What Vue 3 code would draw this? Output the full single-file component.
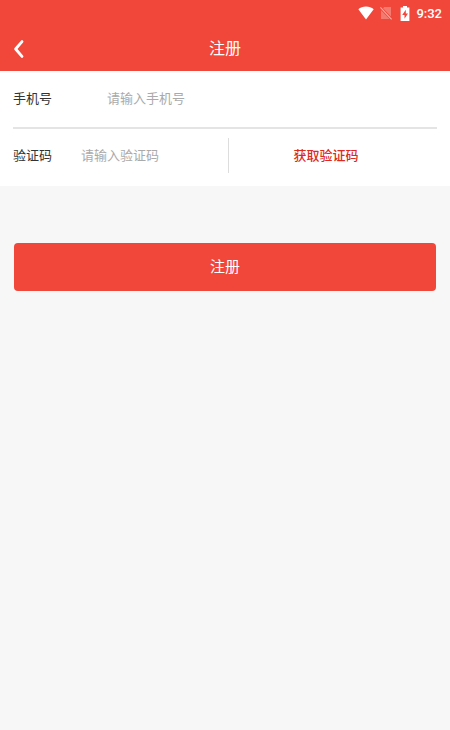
<script setup>
import { ref } from 'vue'

const phone = ref('')
const code = ref('')
</script>

<template>
  <div class="page">
    <header class="header">
      <div class="status">
        <svg class="wifi" viewBox="0 0 16 14" aria-hidden="true">
          <path d="M8 13.5 0.3 3.2C2.4 1.4 5 0.5 8 0.5s5.6 0.9 7.7 2.7z" fill="#fff" />
        </svg>
        <svg class="sim" viewBox="0 0 12 14" aria-hidden="true">
          <path d="M4.2 1H11v9.6L3 2.2zM1 4.2 9.6 13H1z" fill="#f47a6f" />
          <path d="M0.4 1.4 11.6 13.4" stroke="#f8aca5" stroke-width="1.1" />
        </svg>
        <svg class="battery" viewBox="0 0 10 15" aria-hidden="true">
          <path d="M3 0h4v1.6h2.4V15H0.6V1.6H3z" fill="#fff" />
          <path d="M5.8 3.8 2.2 9h2.3v3.8L8 7.6H5.8z" fill="#f0473a" />
        </svg>
        <time class="clock">9:32</time>
      </div>
      <div class="bar">
        <button class="back" type="button" aria-label="返回">
          <svg viewBox="0 0 12 20" aria-hidden="true">
            <path d="M9 2.6 2.6 10 9 17.4" fill="none" stroke="#fff" stroke-width="2.8" stroke-linecap="round" stroke-linejoin="round" />
          </svg>
        </button>
        <h1 class="title">注册</h1>
      </div>
    </header>

    <form class="form" @submit.prevent>
      <div class="fields">
        <div class="row">
          <label class="label wide" for="phone">手机号</label>
          <input id="phone" v-model="phone" class="input" type="tel" placeholder="请输入手机号" />
        </div>
        <div class="row">
          <div class="half">
            <label class="label" for="code">验证码</label>
            <input id="code" v-model="code" class="input" type="text" placeholder="请输入验证码" />
          </div>
          <button class="send" type="button">获取验证码</button>
        </div>
      </div>
      <div class="actions">
        <button class="submit" type="submit">注册</button>
      </div>
    </form>
  </div>
</template>

<style>
body {
  background: #f7f7f7;
}
</style>

<style scoped>
.page {
  min-height: 100vh;
  background: #f7f7f7;
  color: #333;
  font-family: Roboto, "Noto Sans CJK SC", sans-serif;
  font-size: 13px;
}
button,
input {
  box-sizing: border-box;
  margin: 0;
  padding: 0;
  border: 0;
  background: none;
  font: inherit;
}
.header {
  background: #f0473a;
  color: #fff;
}
.status {
  display: flex;
  align-items: center;
  justify-content: flex-end;
  height: 26px;
  padding-right: 8px;
}
.wifi {
  width: 16px;
  height: 14px;
  margin-right: 6px;
}
.sim {
  width: 12px;
  height: 14px;
  margin-right: 8px;
}
.battery {
  width: 10px;
  height: 15px;
  margin-right: 6px;
}
.clock {
  padding-top: 2px;
  font-size: 13px;
  font-weight: 500;
  line-height: 24px;
}
.bar {
  display: grid;
  grid-template-columns: 40px 1fr 40px;
  align-items: center;
  height: 45px;
}
.back {
  height: 44px;
  padding-left: 13px;
  text-align: left;
}
.back svg {
  display: block;
  width: 12px;
  height: 20px;
}
.title {
  margin: 0;
  font-size: 16px;
  font-weight: 400;
  line-height: 24px;
  text-align: center;
}
.fields {
  padding: 0 13px;
  background: #fff;
}
.row {
  display: flex;
  align-items: center;
  box-sizing: border-box;
  height: 56px;
}
.row + .row {
  height: 59px;
  padding-bottom: 4px;
  border-top: 2px solid #e4e4e4;
}
.half {
  display: flex;
  flex: 0 0 51%;
  align-items: center;
  box-sizing: border-box;
  min-width: 0;
  height: 35px;
  border-right: 1px solid #ddd;
}
.label {
  flex: none;
  width: 68px;
  line-height: 20px;
}
.wide {
  width: 94px;
}
.input {
  flex: 1;
  width: 0;
  min-width: 0;
  height: 35px;
  padding-bottom: 1px;
  color: #333;
  outline: none;
}
.input::placeholder {
  color: #aaa;
  opacity: 1;
}
.send {
  flex: 1;
  min-width: 0;
  height: 35px;
  padding-right: 14px;
  padding-bottom: 2px;
  color: #dd2a1e;
  font-weight: 500;
}
.actions {
  padding: 57px 14px;
}
.submit {
  display: block;
  width: 100%;
  height: 48px;
  padding-bottom: 3px;
  border-radius: 4px;
  background: #f0473a;
  color: #fff;
  font-size: 15px;
}
</style>
